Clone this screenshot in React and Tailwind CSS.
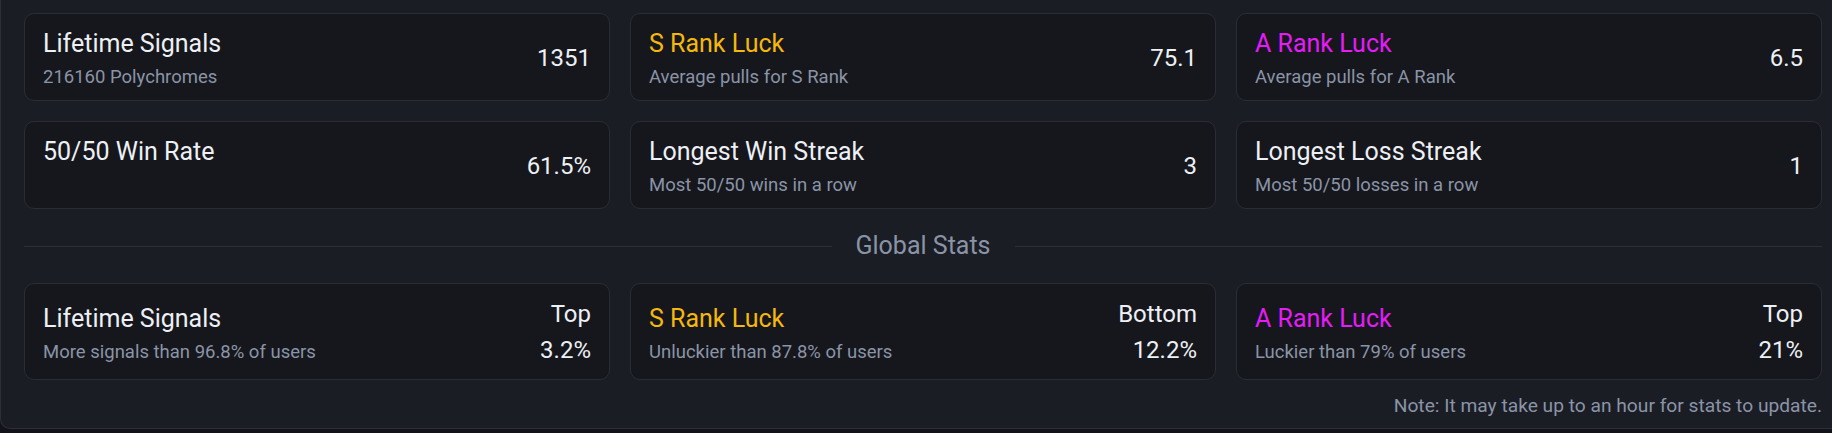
const personal = [
  { title: "Lifetime Signals", sub: "216160 Polychromes", lines: ["1351"] },
  { title: "S Rank Luck", color: "text-[#f5b80c]", sub: "Average pulls for S Rank", lines: ["75.1"] },
  { title: "A Rank Luck", color: "text-[#e41cf8]", sub: "Average pulls for A Rank", lines: ["6.5"] },
  { title: "50/50 Win Rate", sub: "", lines: ["61.5%"] },
  { title: "Longest Win Streak", sub: "Most 50/50 wins in a row", lines: ["3"] },
  { title: "Longest Loss Streak", sub: "Most 50/50 losses in a row", lines: ["1"] },
];

const global = [
  { title: "Lifetime Signals", sub: "More signals than 96.8% of users", lines: ["Top", "3.2%"] },
  { title: "S Rank Luck", color: "text-[#f5b80c]", sub: "Unluckier than 87.8% of users", lines: ["Bottom", "12.2%"] },
  { title: "A Rank Luck", color: "text-[#e41cf8]", sub: "Luckier than 79% of users", lines: ["Top", "21%"] },
];

function StatCard({ title, color, sub, lines }) {
  return (
    <div className="flex items-center justify-between rounded-[10px] border border-[#2a2d36] bg-[#16171c] px-[18px] pt-3 pb-[11px]">
      <div className="flex flex-col">
        <div className={`text-[25px] leading-9 ${color || "text-[#edf0f5]"}`}>{title}</div>
        <div className="mt-[3px] min-h-6 text-[18.5px] leading-6 text-[#8a94a7]">{sub}</div>
      </div>
      <div className="text-right text-[24px] leading-9 text-[#edf0f5]">
        {lines.map((l) => (
          <div key={l}>{l}</div>
        ))}
      </div>
    </div>
  );
}

export default function App() {
  return (
    <div className="h-[433px] w-[1832px] overflow-hidden bg-[#131419] font-['Roboto',sans-serif]">
      <div className="w-[1846px] rounded-b-[10px] border-x border-b border-[#2c2f38] bg-[#1b1d25] px-[23px] pt-[13px] pb-2">
        <div className="grid grid-cols-3 gap-5">
          {personal.map((s) => (
            <StatCard key={s.title} {...s} />
          ))}
        </div>

        <div className="my-[21px] flex items-center gap-6">
          <div className="h-px flex-1 bg-[#2c2f38]" />
          <div className="text-[25px] leading-8 text-[#8a94a7]">Global Stats</div>
          <div className="h-px flex-1 bg-[#2c2f38]" />
        </div>

        <div className="grid grid-cols-3 gap-5">
          {global.map((s) => (
            <StatCard key={s.title} {...s} />
          ))}
        </div>

        <p className="mt-3 text-right text-[19.2px] leading-7 text-[#8a94a7]">
          Note: It may take up to an hour for stats to update.
        </p>
      </div>
    </div>
  );
}
